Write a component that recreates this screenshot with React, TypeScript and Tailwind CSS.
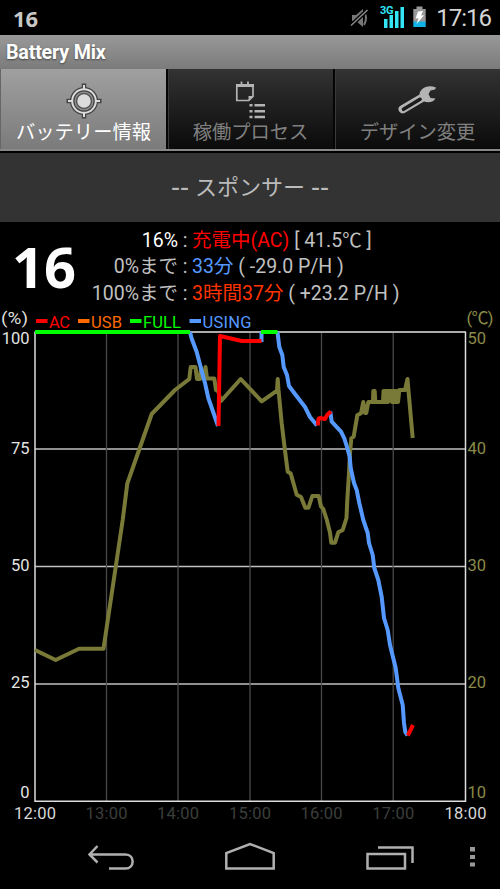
import React from "react";

const JP = "font-['Roboto','Noto_Sans_CJK_JP',sans-serif]";

function StatusBar() {
  return (
    <div className="flex h-[35px] items-center bg-black pr-[9px] pl-[13px]">
      <span className="font-['Open_Sans',sans-serif] text-[22px] leading-none font-bold text-[#c8c8c8]">16</span>
      <svg className="ml-auto" width="90" height="35" viewBox="346 0 90 35">
        <path d="M352 15h4l7-6v18l-7-6h-4z" fill="#777" />
        <path d="M364 11q4 7 0 14" fill="none" stroke="#777" strokeWidth="2" />
        <path d="M351 25.500 367.500 10" stroke="#000" strokeWidth="4" />
        <path d="M351 25.500 367.500 10" stroke="#8a8a8a" strokeWidth="1.500" />
        <text x="380" y="14" fontFamily="Roboto" fontWeight="700" fontSize="11" textLength="13.500" fill="#33e5f5">3G</text>
        <path d="M384 19h3.500v9H384zM389.500 15h3.500v13h-3.500zM395 11h3.500v17H395zM400.500 7h3.500v21h-3.500z" fill="#33e5f5" />
        <path d="M416.500 6.500h6V9h3.200v13H413.300V9h3.200z" fill="#999" />
        <path d="M413.300 21.500h12.400V27H413.300z" fill="#12b4e8" />
        <path d="m418 11.500 5-.5-2 4.500 3-.3-7.500 9 2-6-3 .3z" fill="#fff" />
      </svg>
      <span className="w-[55px] text-right font-['Roboto'] text-[24px] leading-none tracking-[-1px] text-[#d4d4d4]">17:16</span>
    </div>
  );
}

function TargetIcon() {
  return (
    <svg width="36" height="36" viewBox="0 0 36 36" fill="none">
      <g stroke="#444" strokeWidth="4.500">
        <circle cx="18" cy="18" r="11.800" />
        <path d="M18 .5v7M18 28.500v7M.5 18h7M28.500 18h7" />
      </g>
      <g stroke="#dcdcdc" strokeWidth="2">
        <circle cx="18" cy="18" r="11.800" />
        <path d="M18 2v5M18 29v5M2 18h5M29 18h5" />
      </g>
      <circle cx="18" cy="18" r="7.500" fill="#dcdcdc" stroke="#555" strokeWidth="1.500" />
    </svg>
  );
}

function ProcessIcon() {
  return (
    <svg width="36" height="40" viewBox="233 79 36 40" fill="none" stroke="#b4b4b4">
      <path d="M236.800 85v15.500h12l4.200-4.200V85z" strokeWidth="1.700" />
      <path d="M248.500 101v-5h5z" fill="#b4b4b4" stroke="none" />
      <path d="M236 85.500h18" strokeWidth="3" />
      <path d="M241.500 81.500v4M248 81.500v4" strokeWidth="1.800" />
      <path d="M249.500 105.300h3M254.500 105.300h10.500M249.500 111.200h3M254.500 111.200h10.500M249.500 117h3M254.500 117h10.500" strokeWidth="2.500" />
    </svg>
  );
}

function WrenchIcon() {
  return (
    <svg width="42" height="34" viewBox="397 85 42 34" fill="none">
      <path
        d="M400 106 419.500 94.500C420 88.500 427 84 436 87.500L435 89.500 430.500 90.500 428.500 94 430.500 98 435.500 98.500C433 102.500 428 103 424 101.500L404.500 113C400 115 396 109 400 106Z"
        fill="#b4b4b4"
      />
      <path d="M403.500 109.300 420 99.300" stroke="#1c1c1c" strokeWidth="3.600" strokeLinecap="round" />
    </svg>
  );
}

function Tab({ icon, label, active = false }: { icon: React.ReactNode; label: string; active?: boolean }) {
  return (
    <div
      className={
        active
          ? "flex w-[166px] flex-col items-center border-l border-[#666] bg-linear-to-b from-[#a0a0a0] to-[#7b7b7b] text-white"
          : "flex w-[167px] flex-col items-center border-l-2 border-[#050505] bg-linear-to-b from-[#333] to-[#0b0b0b] text-[#808080] shadow-[inset_1px_0_0_#3a3a3a]"
      }
    >
      <div className="flex h-[50px] items-end justify-center">{icon}</div>
      <span className="mt-[3px] text-[19.300px] leading-[22px] whitespace-nowrap">{label}</span>
    </div>
  );
}

function InfoRow({ label, value, color, rest, bright = false }: { label: string; value: string; color: string; rest: string; bright?: boolean }) {
  return (
    <div className="flex h-[26.500px] items-center text-[19.500px] leading-none whitespace-pre text-[#c0c0c0]">
      <span className={bright ? "w-[93px] text-right text-white" : "w-[93px] text-right"}>{label}</span>
      <span className="w-[14px] text-center">:</span>
      <span className={color}>{value}</span>
      <span> {rest}</span>
    </div>
  );
}

const hours = ["12:00", "13:00", "14:00", "15:00", "16:00", "17:00", "18:00"];
const percents = ["100", "75", "50", "25", "0"];
const degrees = ["50", "40", "30", "20", "10"];
const legend = [
  { name: "AC", color: "#ff0000", x: 36, w: 21 },
  { name: "USB", color: "#ff6a00", x: 78, w: 31 },
  { name: "FULL", color: "#00ff00", x: 130, w: 38 },
  { name: "USING", color: "#5599ff", x: 189.500, w: 49 },
];

const temperature =
  "35,650 55.7,660 79,648.7 103.5,648.7 122.7,520 127.3,483.5 151.7,414 175,390 189.3,379 190.7,367 195.5,367 197,379 200,379 201,368 203,378 205,378 205.5,367 207,378.5 214.3,378.5 216,390 218,391 221,401 240.7,379 261.7,401.3 277,390.7 277.7,379 278.5,390 281.7,423.3 284.7,448.3 287.7,471.7 290.7,473.5 296.7,494.7 301,497 305.3,507.7 308.5,507.7 312.3,496 318.7,496 321,506.5 323.3,509 326.7,519.5 330,532.7 331.3,542.7 335,542.7 338.3,532.3 342.7,530 346.5,518 347.3,500 349,473 350,453 351.3,438.3 353.7,436.7 357.3,415.3 361,413.3 363.3,402 365,413 366.3,413 368.3,402 373,402 373.300,391 374.7,391 375.3,402 383,402 383.5,391 385,391 385,402 386.5,402 386.5,391 388,391 388,402 389,391 391.7,391 392,402 393.5,391 394,402 395.5,391 396,402 397.5,391 398,402 399.3,390 405,390 407.5,379 408.5,391 412.7,438";
const discharge = [
  "190,332 191.5,338 196.7,352 203.3,377 205,383 208.3,398 217,423 218,426",
  "261.5,342 261.5,332",
  "277.5,332 279.3,347 282.3,355 283.7,367 287,375 289,386 295,394 305,407 310,417 317,425.5",
  "330.3,411.5 331.7,421.7 341,431.7 344.3,438.3 347.3,448 349.7,457 350.7,468 354,483 356.7,490 359.3,503 363.3,520 367.7,533 369,543 372.7,555 374.3,568 378.3,580 381.7,597 384,618 387.7,630 390,645 395.7,668 398.3,688 402.7,705 404,723 405.3,732 407.5,735.5",
];
const charge = ["218.5,426 220,336 241.7,341 261.5,341", "317.7,425.5 318.5,419 320,418 325,419 327.5,414.5 331,411.5", "407.8,735.5 413,725"];

function Chart() {
  return (
    <svg width="500" height="520" viewBox="0 308 500 520" fontFamily="Roboto, 'Noto Sans CJK JP', sans-serif" fontSize="16.500">
      <text x="1" y="324" fill="#ddd" fontSize="17" textLength="27" lengthAdjust="spacingAndGlyphs">(%)</text>
      <text x="466.500" y="324" fill="#8b8b48" fontSize="17" textLength="27">(℃)</text>
      {legend.map((l) => (
        <g key={l.name} fill={l.color}>
          <rect x={l.x} y="319" width="11.500" height="4" />
          <text x={l.x + 13} y="328" textLength={l.w}>{l.name}</text>
        </g>
      ))}
      {[449, 566.500, 684].map((y) => (
        <path key={y} d={`M35 ${y}H465.500`} stroke="#c0c0c0" strokeWidth="1.700" />
      ))}
      <path d="M35 332H465.500" stroke="#aaa" strokeWidth="2" />
      {[106.500, 178, 250, 321.500, 393.200].map((x) => (
        <path key={x} d={`M${x} 333V801`} stroke="#4a4a4a" strokeWidth="1.300" />
      ))}
      <path d="M35 331.500V801.200H465.500V331.500" fill="none" stroke="#dedede" strokeWidth="1.500" />
      {percents.map((p, i) => (
        <text key={p} x="29.500" y={[344, 454, 571, 688, 798][i]} textAnchor="end" fill="#e4e4e4">{p}</text>
      ))}
      {degrees.map((d, i) => (
        <text key={d} x="467.500" y={[344, 454, 571, 688, 798][i]} fill="#8b8b48">{d}</text>
      ))}
      {hours.map((h, i) => (
        <text key={h} x={[35, 106.500, 178, 250, 321.500, 393.200, 465.500][i]} y="819" textAnchor="middle" textLength="42" fill={i % 6 === 0 ? "#d8d8d8" : "#3b3f3b"}>{h}</text>
      ))}
      <g fill="none" strokeWidth="4" strokeLinejoin="round">
        <polyline points={temperature} stroke="#7a7a38" />
        {discharge.map((points) => (
          <polyline key={points} points={points} stroke="#5599ff" />
        ))}
        {charge.map((points) => (
          <polyline key={points} points={points} stroke="#ff0000" />
        ))}
        <path stroke="#00ff00" d="M35 332h155M261 332h16.500" />
      </g>
    </svg>
  );
}

function NavBar() {
  return (
    <svg className="flex-1" width="500" height="61" viewBox="0 828 500 61" fill="none" stroke="#b0b0b0" strokeWidth="2.500">
      <path d="M97.500 846l-8 8.500 8 8M89.500 854.500h36c9.500 0 9.500 14 0 14h-16.500" />
      <path d="M226.300 868.500V853l23.700-9 23.700 9v15.500z" />
      <path d="M367.500 854H405v14.500h-37.500zM378 847.500h34.500V863" />
      <path d="M472.500 847v4.500M472.500 855v4M472.500 862.500v4" stroke="#999" strokeWidth="5" />
    </svg>
  );
}

export default function App() {
  return (
    <main className={`flex h-[889px] w-[500px] flex-col overflow-hidden bg-black ${JP}`}>
      <StatusBar />
      <header className="flex h-[34px] items-center bg-linear-to-b from-[#999] to-[#7b7b7b] pt-[2px] pl-[6px]">
        <h1 className="text-[19.700px] leading-none font-bold tracking-[-0.2px] text-white [text-shadow:0_1px_2px_#444]">Battery Mix</h1>
      </header>
      <nav className="flex h-[82px] border-b-2 border-[#888] bg-black">
        <Tab active icon={<TargetIcon />} label="バッテリー情報" />
        <Tab icon={<ProcessIcon />} label="稼働プロセス" />
        <Tab icon={<WrenchIcon />} label="デザイン変更" />
      </nav>
      <section className="mt-[2px] flex h-[69px] items-center justify-center gap-[6px] bg-[#333] text-[22px] text-[#bbb]">
        <span className="font-['Liberation_Sans'] text-[27px] leading-none">--</span>
        <span>スポンサー</span>
        <span className="font-['Liberation_Sans'] text-[27px] leading-none">--</span>
      </section>
      <section className="flex h-[86px] pt-[5px]">
        <div className="flex h-[77px] w-[85px] items-center pl-[12px] font-['Open_Sans'] text-[56px] leading-none font-bold text-white">16</div>
        <div>
          <InfoRow bright label="16%" color="text-[#ff0000]" value="充電中(AC)" rest="[ 41.5℃ ]" />
          <InfoRow label="0%まで" color="text-[#5599ff]" value="33分" rest="( -29.0 P/H )" />
          <InfoRow label="100%まで" color="text-[#ff3300]" value="3時間37分" rest="( +23.2 P/H )" />
        </div>
      </section>
      <Chart />
      <NavBar />
    </main>
  );
}
